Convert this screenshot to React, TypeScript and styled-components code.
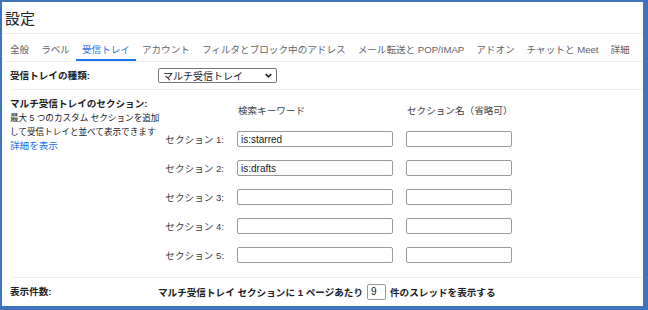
import React, { FC } from "react";
import styled, { createGlobalStyle } from "styled-components";

const GlobalStyle = createGlobalStyle`
  html, body {
    margin: 0;
    padding: 0;
    background: #ffffff;
  }
  body {
    font-family: "Liberation Sans", "Noto Sans CJK JP", sans-serif;
    color: #202124;
  }
`;

const tabs = [
  "全般",
  "ラベル",
  "受信トレイ",
  "アカウント",
  "フィルタとブロック中のアドレス",
  "メール転送と POP/IMAP",
  "アドオン",
  "チャットと Meet",
  "詳細",
];

const sections = [
  { label: "セクション 1:", query: "is:starred" },
  { label: "セクション 2:", query: "is:drafts" },
  { label: "セクション 3:", query: "" },
  { label: "セクション 4:", query: "" },
  { label: "セクション 5:", query: "" },
];

const App: FC = () => {
  return (
    <>
      <GlobalStyle />
      <Frame>
        <Title>設定</Title>

        <TabBar>
          {tabs.map(tab => (
            <Tab key={tab} active={tab === "受信トレイ"}>
              {tab}
            </Tab>
          ))}
        </TabBar>

        <Content>
          <SettingRow>
            <RowLabel>受信トレイの種類:</RowLabel>
            <Select>
              <span>マルチ受信トレイ</span>
              <Chevron viewBox="0 0 10 10">
                <path d="M2 3.5 L5 6.5 L8 3.5" />
              </Chevron>
            </Select>
          </SettingRow>

          <SectionsRow>
            <SectionIntro>
              <RowLabel>マルチ受信トレイのセクション:</RowLabel>
              <Hint>最大 5 つのカスタム セクションを追加</Hint>
              <Hint>して受信トレイと並べて表示できます</Hint>
              <HelpLink>詳細を表示</HelpLink>
            </SectionIntro>

            <SectionGrid>
              <span />
              <ColumnHead>検索キーワード</ColumnHead>
              <ColumnHead>セクション名（省略可）</ColumnHead>
              {sections.map(s => (
                <React.Fragment key={s.label}>
                  <SectionLabel>{s.label}</SectionLabel>
                  <TextBox width={156} defaultValue={s.query} />
                  <TextBox width={106} defaultValue="" />
                </React.Fragment>
              ))}
            </SectionGrid>
          </SectionsRow>

          <LastRow>
            <RowLabel>表示件数:</RowLabel>
            <PageSize>
              マルチ受信トレイ セクションに 1 ページあたり
              <CountBox defaultValue="9" />
              件のスレッドを表示する
            </PageSize>
          </LastRow>
        </Content>
      </Frame>
    </>
  );
};

export default App;

const Frame = styled.div`
  width: 648px;
  height: 310px;
  box-sizing: border-box;
  border-style: solid;
  border-color: #3f74bd;
  border-width: 2px 5px 4px 2px;
  background: #ffffff;
  overflow: hidden;
`;

const Title = styled.div`
  height: 31px;
  display: flex;
  align-items: center;
  padding-left: 3px;
  font-size: 15px;
  color: #202124;
  border-bottom: 1px solid #eceef0;
`;

const TabBar = styled.div`
  display: flex;
  height: 27px;
  padding-left: 2px;
  border-bottom: 1px solid #eceef0;
`;

const Tab = styled.div<{ active?: boolean }>`
  display: flex;
  align-items: center;
  padding: 2px 6px 0;
  font-size: 9.6px;
  white-space: nowrap;
  color: ${props => (props.active ? "#1a73e8" : "#5f6368")};
  box-shadow: ${props => (props.active ? "inset 0 -2px 0 #1a73e8" : "none")};
`;

const Content = styled.div`
  padding: 0 0 0 8px;
`;

const SettingRow = styled.div`
  display: grid;
  grid-template-columns: 148px 1fr;
  align-items: center;
  height: 27px;
  border-bottom: 1px solid #eceef0;
`;

const RowLabel = styled.div`
  font-size: 9.6px;
  font-weight: bold;
  color: #202124;
  line-height: 14px;
`;

const Select = styled.div`
  width: 119px;
  height: 15px;
  box-sizing: border-box;
  border: 1px solid #767676;
  border-radius: 2px;
  display: flex;
  align-items: center;
  justify-content: space-between;
  padding: 0 3px 0 4px;
  font-size: 10px;
  color: #202124;
`;

const Chevron = styled.svg`
  width: 9px;
  height: 9px;
  fill: none;
  stroke: #202124;
  stroke-width: 1.8;
`;

const SectionsRow = styled.div`
  display: grid;
  grid-template-columns: 148px 1fr;
  align-items: start;
  padding: 7px 0 14px;
  border-bottom: 1px solid #eceef0;
`;

const SectionIntro = styled.div`
  display: flex;
  flex-direction: column;
`;

const Hint = styled.div`
  font-size: 8.6px;
  line-height: 14px;
  color: #202124;
  white-space: nowrap;
`;

const HelpLink = styled.a`
  font-size: 9.6px;
  line-height: 14px;
  color: #1a73e8;
  cursor: pointer;
`;

const SectionGrid = styled.div`
  display: grid;
  grid-template-columns: 66px 156px 106px;
  grid-auto-rows: 16px;
  column-gap: 13px;
  row-gap: 13px;
  align-items: center;
  padding-top: 5px;
`;

const ColumnHead = styled.div`
  font-size: 9.6px;
  color: #3c4043;
  white-space: nowrap;
  padding-left: 1px;
`;

const SectionLabel = styled.div`
  font-size: 9.6px;
  color: #3c4043;
  text-align: right;
  white-space: nowrap;
`;

const TextBox = styled.input<{ width: number }>`
  width: ${props => props.width}px;
  height: 16px;
  box-sizing: border-box;
  border: 1px solid #9a9a9a;
  border-radius: 2px;
  padding: 0 3px;
  font-family: "Liberation Sans", sans-serif;
  font-size: 10px;
  color: #202124;
  outline: none;
`;

const LastRow = styled.div`
  display: grid;
  grid-template-columns: 148px 1fr;
  align-items: center;
  height: 27px;
`;

const PageSize = styled.div`
  display: flex;
  align-items: center;
  font-size: 9.6px;
  font-weight: bold;
  color: #202124;
  white-space: nowrap;
`;

const CountBox = styled.input`
  width: 19px;
  height: 16px;
  box-sizing: border-box;
  margin: 0 4px;
  border: 1px solid #9a9a9a;
  border-radius: 2px;
  padding: 0 3px;
  font-family: "Liberation Sans", sans-serif;
  font-size: 10px;
  color: #202124;
  outline: none;
`;
